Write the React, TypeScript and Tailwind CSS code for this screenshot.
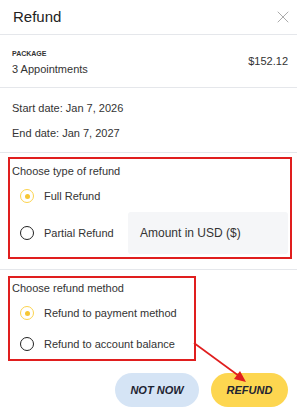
import { X } from "lucide-react";

function Radio({ checked, label }: { checked?: boolean; label: string }) {
  return (
    <div className="flex items-center gap-[10px] h-[20px]">
      {checked ? (
        <span className="w-[14px] h-[14px] rounded-full border-[1.5px] border-[#fcd34d] flex items-center justify-center">
          <span className="w-[5px] h-[5px] rounded-full bg-[#f6c634]" />
        </span>
      ) : (
        <span className="w-[14px] h-[14px] rounded-full border-[1.5px] border-[#222]" />
      )}
      <span className="text-[11px] text-[#333]">{label}</span>
    </div>
  );
}

export default function App() {
  return (
    <div
      className="relative w-[297px] h-[418px] bg-white text-[#333] overflow-hidden"
      style={{ fontFamily: '"Liberation Sans", Arial, sans-serif' }}
    >
      <header className="h-[35px] border-b border-[#e5e7eb] flex items-center justify-between pl-[13px] pr-[4px]">
        <h1 className="text-[15px] font-medium text-[#222]">Refund</h1>
        <X size={20} strokeWidth={1} className="text-[#9a9a9a]" />
      </header>

      <section className="h-[53px] border-b border-[#e5e7eb] flex items-center justify-between pl-[12px] pr-[9px]">
        <div className="pt-[2px]">
          <div className="text-[7px] leading-[9px] font-semibold text-[#333]">PACKAGE</div>
          <div className="text-[11px] leading-[14px] mt-[4px]">3 Appointments</div>
        </div>
        <div className="text-[11px]">$152.12</div>
      </section>

      <section className="h-[65px] border-b border-[#e5e7eb] pl-[12px] pt-[13px] text-[11px]">
        <div className="leading-[14px]">Start date: Jan 7, 2026</div>
        <div className="leading-[14px] mt-[11px]">End date: Jan 7, 2027</div>
      </section>

      <section className="border-b border-[#e5e7eb] pt-[4px] pb-[10px]">
        <div className="ml-[8px] mr-[5px] border-2 border-[#e01e1e] pt-[5px] pb-[3px]">
          <div className="text-[11px] leading-[14px] pl-[2px]">Choose type of refund</div>
          <div className="ml-[10px] mt-[8px]">
            <Radio checked label="Full Refund" />
          </div>
          <div className="flex items-center justify-between mt-[6px] ml-[10px] mr-[2px]">
            <Radio label="Partial Refund" />
            <div className="w-[160px] h-[42px] rounded-[3px] bg-[#f5f6f8] flex items-center pl-[12px] text-[12px] text-[#333]">
              Amount in USD ($)
            </div>
          </div>
        </div>
      </section>

      <section className="pt-[6px]">
        <div className="ml-[8px] w-[188px] border-2 border-[#e01e1e] pt-[3px] pb-[5px]">
          <div className="text-[11px] leading-[14px] pl-[2px]">Choose refund method</div>
          <div className="ml-[10px] mt-[8px]">
            <Radio checked label="Refund to payment method" />
          </div>
          <div className="ml-[10px] mt-[11px]">
            <Radio label="Refund to account balance" />
          </div>
        </div>

        <div className="flex justify-end gap-[12px] pr-[9px] mt-[12px]">
          <button className="w-[84px] h-[34px] rounded-full bg-[#d5e4f5] text-[11px] font-bold italic text-[#1f2433]">
            NOT NOW
          </button>
          <button className="w-[77px] h-[34px] rounded-full bg-[#fdd650] text-[11px] font-bold italic text-[#1f2433]">
            REFUND
          </button>
        </div>
      </section>

      <svg className="absolute left-0 top-0 pointer-events-none" width="297" height="418">
        <line x1="194" y1="343" x2="239" y2="376" stroke="#e01e1e" strokeWidth="1.6" />
        <polygon points="246,382 234,379 240,371" fill="#e01e1e" />
      </svg>
    </div>
  );
}
